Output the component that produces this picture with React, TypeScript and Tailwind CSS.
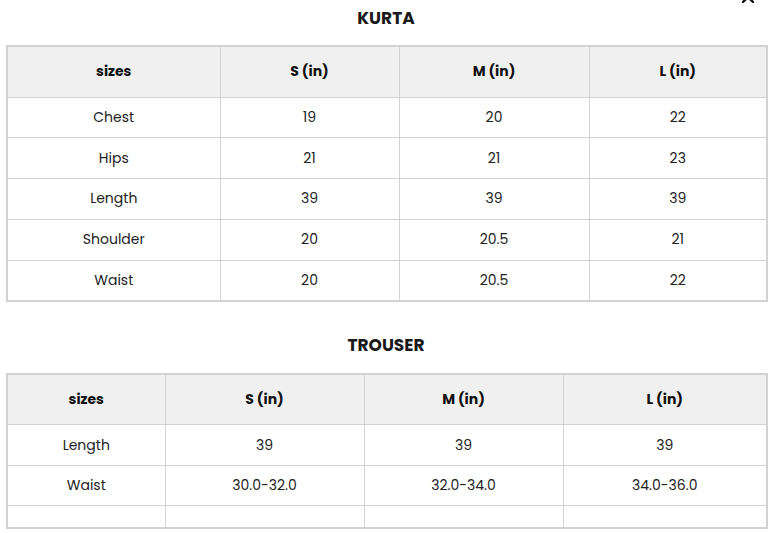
const kurta = {
  widths: ['w-[213px]', 'w-[179px]', 'w-[190px]', 'w-[178px]'],
  rows: [
    ['Chest', '19', '20', '22'],
    ['Hips', '21', '21', '23'],
    ['Length', '39', '39', '39'],
    ['Shoulder', '20', '20.5', '21'],
    ['Waist', '20', '20.5', '22'],
  ],
}

const trouser = {
  widths: ['w-[158px]', 'w-[199px]', 'w-[199px]', 'w-[204px]'],
  rows: [
    ['Length', '39', '39', '39'],
    ['Waist', '30.0-32.0', '32.0-34.0', '34.0-36.0'],
  ],
}

const heads = ['sizes', 'S (in)', 'M (in)', 'L (in)']

function SizeTable({
  widths,
  rows,
  rowClass,
  emptyRow,
}: {
  widths: string[]
  rows: string[][]
  rowClass: string
  emptyRow?: boolean
}) {
  return (
    <table className="w-[760px] table-fixed border-collapse border-2 border-[#d2d2d2] text-center text-[14px] text-[#222]">
      <thead>
        <tr className="h-[51px] bg-[#f0f0f0]">
          {heads.map((h, i) => (
            <th key={h} className={`${widths[i]} border border-[#d2d2d2] font-bold text-[#111]`}>
              {h}
            </th>
          ))}
        </tr>
      </thead>
      <tbody>
        {rows.map((r) => (
          <tr key={r[0]} className={rowClass}>
            {r.map((c, i) => (
              <td key={i} className="border border-[#d2d2d2]">
                {c}
              </td>
            ))}
          </tr>
        ))}
        {emptyRow && (
          <tr className="h-[22px]">
            {heads.map((h) => (
              <td key={h} className="border border-[#d2d2d2]" />
            ))}
          </tr>
        )}
      </tbody>
    </table>
  )
}

export default function App() {
  return (
    <div className="relative h-[533px] w-[769px] overflow-hidden bg-white pl-[6px] font-['Poppins','Open_Sans',sans-serif]">
      {/* close button, mostly scrolled out of view */}
      <button className="absolute right-[15px] top-[-9px]" aria-label="Close">
        <svg width="12" height="12" viewBox="0 0 12 12">
          <path d="M1 1L11 11M11 1L1 11" stroke="#111" strokeWidth="2.4" strokeLinecap="round" />
        </svg>
      </button>

      <h3 className="h-[45px] w-[760px] pt-[6px] text-center text-[17px] font-bold leading-[24px] text-[#1a1a1a]">
        KURTA
      </h3>
      <SizeTable widths={kurta.widths} rows={kurta.rows} rowClass="h-[40.8px]" />

      <h3 className="h-[71px] w-[760px] pt-[31px] text-center text-[17px] font-bold leading-[24px] text-[#1a1a1a]">
        TROUSER
      </h3>
      <SizeTable widths={trouser.widths} rows={trouser.rows} rowClass="h-[40.5px]" emptyRow />
    </div>
  )
}
